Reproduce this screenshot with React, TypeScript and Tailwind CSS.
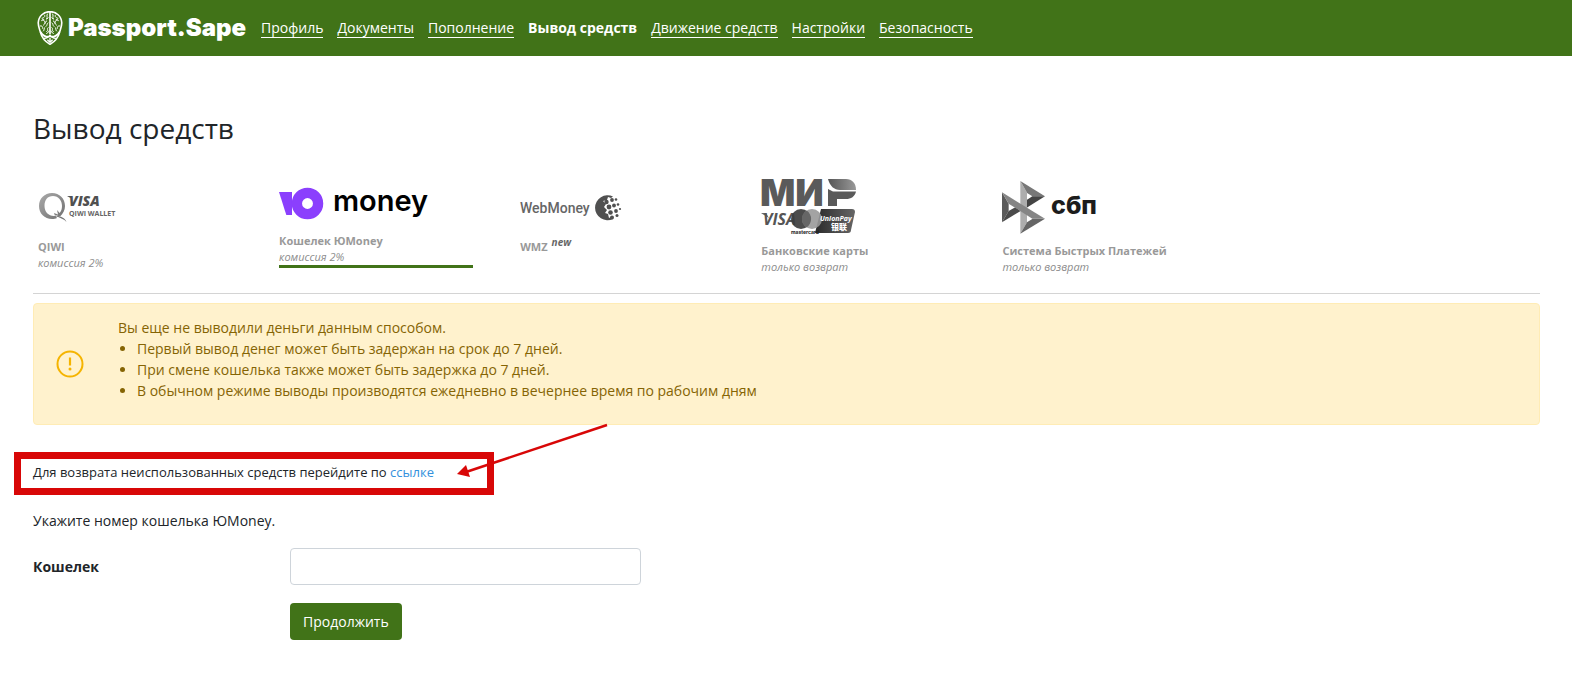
import type { ReactNode } from "react";

const navItems = [
  { label: "Профиль" },
  { label: "Документы" },
  { label: "Пополнение" },
  { label: "Вывод средств", active: true },
  { label: "Движение средств" },
  { label: "Настройки" },
  { label: "Безопасность" },
];

function BrainLogo() {
  return (
    <svg viewBox="0 0 78 104" className="h-[34px] w-[26px]" fill="none" stroke="#fff" aria-hidden="true">
      <path
        d="M39 2C20 2 4 16 3 36c0 12 4 20 7 30 3 12 12 26 29 36 17-10 26-24 29-36 3-10 7-18 7-30C74 16 58 2 39 2Z"
        strokeWidth="5"
      />
      <path d="M39 3v68" strokeWidth="5" />
      <path d="M10 64c6 10 14 15 24 15 2 0 4-2 5-6 1 4 3 6 5 6 10 0 18-5 24-15" strokeWidth="6" />
      <path d="M20 84c6 0 10-2 13-4M58 84c-6 0-10-2-13-4M39 82v16M31 88l8 8 8-8" strokeWidth="4" />
      <path
        d="M32 8c-6 6 2 10-4 16M22 12c4 6-4 10-8 10M12 30c6-4 12 0 12 8M30 30c-8 2-4 10-12 14M8 46c6-2 10 2 8 8M34 36c-6 2-2 8-8 12M24 50c-6 2 0 8-6 12M34 50c-6 4 2 8-6 14M28 70c2-6 8-2 8-10M34 20l-6 6M14 24l8 4"
        strokeWidth="3"
      />
      <path
        d="M46 8c6 6-2 10 4 16M56 12c-4 6 4 10 8 10M66 30c-6-4-12 0-12 8M48 30c8 2 4 10 12 14M70 46c-6-2-10 2-8 8M44 36c6 2 2 8 8 12M54 50c6 2 0 8 6 12M44 50c6 4-2 8 6 14M50 70c-2-6-8-2-8-10M44 20l6 6M64 24l-8 4"
        strokeWidth="3"
      />
    </svg>
  );
}

function QiwiLogo() {
  return (
    <svg viewBox="0 0 82 32" className="h-8 w-[82px] overflow-visible" role="img" aria-label="Visa QIWI Wallet">
      <defs>
        <linearGradient id="qiwi" x1="0" y1="0" x2="1" y2="1">
          <stop offset="0" stopColor="#aaa" />
          <stop offset="1" stopColor="#707070" />
        </linearGradient>
      </defs>
      <path
        fillRule="evenodd"
        fill="url(#qiwi)"
        d="M14 2C6.500 2 1 7.500 1 15s5.500 13 13 13c2 0 3.500-.3 5-1l-2-3 5 1.500C25 23 27 19 27 15 27 7.500 21.500 2 14 2Zm1 3c5.500 0 9 4.500 9 10 0 3-.8 5-2.300 7L19 19l1 4.500-4-1.500 1 3c-6 .6-10.500-4-10.500-10S9.500 5 15 5Z"
      />
      <path d="M17 25c6-.500 10 2 11.500 6-2.500-3-6-4-11.500-6Z" fill="#777" />
      <path d="M29 5h5l-1.500 2Z" fill="#555" />
      <text x="31" y="15" fontFamily="Open Sans, sans-serif" fontWeight="800" fontStyle="italic" fontSize="14" fill="#505050">VISA</text>
      <text x="31" y="25" fontFamily="Open Sans, sans-serif" fontWeight="700" fontSize="7" fill="#666">QIWI WALLET</text>
    </svg>
  );
}

function YooMoneyLogo() {
  return (
    <svg viewBox="0 0 150 40" className="h-10 w-[150px] overflow-visible" role="img" aria-label="ЮMoney">
      <path d="M0 5h13v23H7.300Z" fill="#8b3ffd" />
      <circle cx="28.500" cy="16.500" r="10.600" fill="none" stroke="#8b3ffd" strokeWidth="10.300" />
      <text x="54" y="24" fontFamily="Inter, sans-serif" fontWeight="600" fontSize="29" fill="#000">money</text>
    </svg>
  );
}

function WebMoneyLogo() {
  return (
    <svg viewBox="0 0 102 28" className="h-7 w-[102px] overflow-visible" role="img" aria-label="WebMoney">
      <text x="0" y="20" fontFamily="Roboto, sans-serif" fontWeight="500" fontSize="14" fill="#666">WebMoney</text>
      <path
        d="M93 3.500A12.500 12.500 0 1 0 93 26l-2-2-2 1-1-4-3-1 2-3-3-3 2-3-3-3 4-1 1-3 3 1Z"
        fill="#505050"
      />
      <g fill="#505050">
        <circle cx="86.500" cy="9" r="2.200" /><circle cx="92" cy="7" r="1.900" /><circle cx="96" cy="6.500" r="1.300" />
        <circle cx="89" cy="14" r="2.400" /><circle cx="94" cy="12.500" r="1.900" /><circle cx="98" cy="11.500" r="1.300" />
        <circle cx="90.500" cy="19.500" r="2.300" /><circle cx="96" cy="18" r="1.900" /><circle cx="100" cy="16" r="1.100" />
        <circle cx="92" cy="24.500" r="2" /><circle cx="97" cy="22.500" r="1.500" />
      </g>
    </svg>
  );
}

function CardsLogo() {
  return (
    <svg viewBox="0 0 96 58" className="h-[58px] w-24 overflow-visible" role="img" aria-label="МИР, Visa, Mastercard, UnionPay">
      <defs>
        <linearGradient id="mir" x1="0" x2="1">
          <stop offset="0" stopColor="#555" />
          <stop offset="1" stopColor="#999" />
        </linearGradient>
        <linearGradient id="union" x1="0" x2="1">
          <stop offset="0" stopColor="#2a2a2a" />
          <stop offset="1" stopColor="#666" />
        </linearGradient>
      </defs>
      <text x="-1" y="28" fontFamily="Inter, sans-serif" fontWeight="900" fontSize="37" fill="#5a5a5a">МИ</text>
      <path d="M67 11l5 2.500h23c-1 5-5 7.500-10 7.500h-9v7h-9Z" fill="#5a5a5a" />
      <path d="M67 1h18c6 0 10 4 10 11H79c-6 0-10-4-12-11Z" fill="url(#mir)" />
      <path d="M0 35h5l3 5Z" fill="#666" />
      <text x="2" y="47" fontFamily="Open Sans, sans-serif" fontWeight="700" fontStyle="italic" fontSize="16" fill="#555">VISA</text>
      <path d="M60 31h31c2 0 3 1 3 3l-4 18c0 2-1 3-3 3H54Z" fill="url(#union)" />
      <circle cx="40" cy="41" r="10" fill="#3d3d3d" fillOpacity=".92" />
      <circle cx="51" cy="41" r="10" fill="#999" fillOpacity=".9" />
      <path d="M45.500 32.600a10 10 0 0 1 0 16.800 10 10 0 0 1 0-16.800Z" fill="#666" />
      <text x="30" y="56" fontFamily="Inter, sans-serif" fontWeight="700" fontSize="5" fill="#222">mastercard</text>
      <text x="59" y="43" fontFamily="Open Sans, sans-serif" fontWeight="700" fontStyle="italic" fontSize="7" fill="#fff">UnionPay</text>
      <text x="70" y="52" fontFamily="Noto Sans CJK SC, sans-serif" fontWeight="900" fontSize="8" fill="#fff">银联</text>
    </svg>
  );
}

function SbpLogo() {
  return (
    <svg viewBox="0 0 97 54" className="h-[54px] w-[97px] overflow-visible" role="img" aria-label="СБП">
      <g transform="translate(-13 -11) scale(.3333)">
        <path d="M39 67 59 101v22L39 157Z" fill="#5a5a5a" />
        <path d="M39 157 59 123l20-11 16 11Z" fill="#4a4a4a" />
        <path d="M94 33 168 79h-38L113 68Z" fill="#777" />
        <path d="M168 79h-38L113 90v23Z" fill="#444" />
        <path d="M94 33 114 67v90L94 191Z" fill="#adadad" />
        <path d="M94 191 114 157l17-11h37Z" fill="#666" />
        <path d="M39 67 168 146h-38L59 101Z" fill="#858585" />
      </g>
      <text x="49" y="33" fontFamily="Inter, sans-serif" fontWeight="800" fontSize="25" fill="#1c1c1c">сбп</text>
    </svg>
  );
}

type Method = {
  name: string;
  note?: string;
  badge?: string;
  logo: ReactNode;
  logoBox: string;
  active?: boolean;
};

const methods: Method[] = [
  { name: "QIWI", note: "комиссия 2%", logo: <QiwiLogo />, logoBox: "h-16 pt-4" },
  { name: "Кошелек ЮMoney", note: "комиссия 2%", logo: <YooMoneyLogo />, logoBox: "h-[58px] pt-3", active: true },
  { name: "WMZ", badge: "new", logo: <WebMoneyLogo />, logoBox: "h-16 pt-[18px]" },
  { name: "Банковские карты", note: "только возврат", logo: <CardsLogo />, logoBox: "h-[68px] pt-[3px]" },
  { name: "Система Быстрых Платежей", note: "только возврат", logo: <SbpLogo />, logoBox: "h-[68px] pt-[6px]" },
];

export default function App() {
  return (
    <div className="min-h-screen bg-white font-['Open_Sans','Noto_Sans',sans-serif] text-sm leading-[21px] text-[#212529]">
      <header className="flex h-14 items-center bg-[#417318] pl-[37px] text-white">
        <a href="#" className="flex items-center gap-[5px]">
          <BrainLogo />
          <span className="font-['Inter',sans-serif] text-[24px] leading-7 font-black">Passport.Sape</span>
        </a>
        <nav className="ml-[15px] flex items-center gap-[14px] leading-[18px]">
          {navItems.map((item) =>
            item.active ? (
              <a key={item.label} href="#" aria-current="page" className="border-b border-transparent font-bold">
                {item.label}
              </a>
            ) : (
              <a key={item.label} href="#" className="border-b border-white">
                {item.label}
              </a>
            ),
          )}
        </nav>
      </header>

      <main className="pt-[55px] pr-8 pl-[33px]">
        <h1 className="text-[28px] leading-[34px]">Вывод средств</h1>

        <div className="mt-[30px] flex h-[119px] border-b border-[#d4d4d4]">
          {methods.map((m) => (
            <a key={m.name} href="#" className="block w-[16%] pr-[42px] pl-[5px] text-[11px] leading-4 text-[#8c8c8c]">
              <span className={`block ${m.logoBox}`}>{m.logo}</span>
              <span className="block font-bold whitespace-nowrap text-[#999]">
                {m.name}
                {m.badge && <sup className="ml-1 text-[10px] font-bold text-[#666] italic">{m.badge}</sup>}
              </span>
              {m.note && <span className="block italic">{m.note}</span>}
              {m.active && <span className="block h-[3px] bg-[#417318]" />}
            </a>
          ))}
        </div>

        <div
          role="alert"
          className="mt-[9px] flex items-center rounded border border-[#ffecb5] bg-[#fff2cd] pt-[13px] pb-[23px] text-[#856404]"
        >
          <svg viewBox="0 0 28 28" className="mt-[9px] ml-[22px] size-7 shrink-0" fill="none" stroke="#f5b400" aria-hidden="true">
            <circle cx="14" cy="14" r="12.500" strokeWidth="2" />
            <path d="M14 7.500v8" strokeWidth="2.200" />
            <circle cx="14" cy="19" r="1.500" fill="#f5b400" stroke="none" />
          </svg>
          <div className="ml-[34px]">
            <p>Вы еще не выводили деньги данным способом.</p>
            <ul className="list-disc pl-[19px]">
              <li>Первый вывод денег может быть задержан на срок до 7 дней.</li>
              <li>При смене кошелька также может быть задержка до 7 дней.</li>
              <li>В обычном режиме выводы производятся ежедневно в вечернее время по рабочим дням</li>
            </ul>
          </div>
        </div>

        <div className="relative mt-[27px] -ml-[19px] w-[480px] border-[7px] border-[#d80707] px-3 pt-[3px] pb-[5px]">
          <p className="text-[13px] whitespace-nowrap">
            Для возврата неиспользованных средств перейдите по{" "}
            <a href="#" className="text-[#3490dc]">ссылке</a>
          </p>
          <svg viewBox="0 0 152 56" className="absolute -top-9 left-[435px] h-14 w-[152px]" aria-hidden="true">
            <path d="M151 2 10 49" stroke="#d80707" strokeWidth="2.500" />
            <path d="M1 51 10 42l4 12Z" fill="#d80707" />
          </svg>
        </div>

        <p className="mt-[15px]">Укажите номер кошелька ЮMoney.</p>

        <form className="mt-[17px]" onSubmit={(e) => e.preventDefault()}>
          <div className="flex items-center">
            <label htmlFor="wallet" className="w-[257px] font-bold">Кошелек</label>
            <input id="wallet" type="text" className="h-[37px] w-[351px] rounded border border-[#ced4da] bg-white px-3 outline-none" />
          </div>
          <button type="submit" className="mt-[18px] ml-[257px] h-[37px] rounded bg-[#417318] px-[13px] text-white">
            Продолжить
          </button>
        </form>
      </main>
    </div>
  );
}
